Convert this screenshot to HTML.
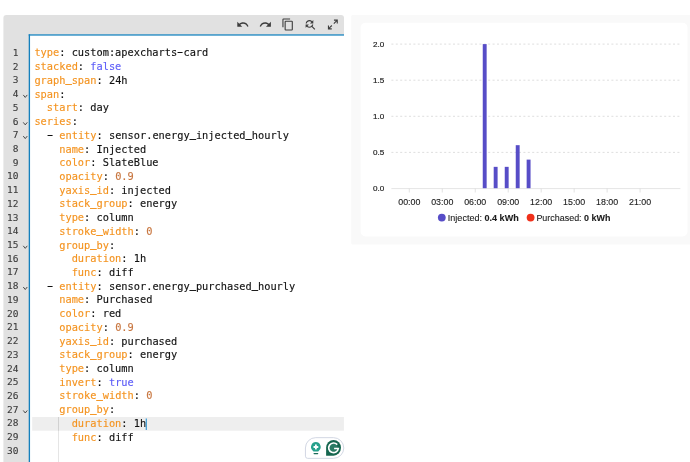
<!DOCTYPE html>
<html lang="en"><head><meta charset="utf-8"><title>apexcharts-card editor</title>
<style>
html,body{margin:0;padding:0;background:#fff;}
body{width:690px;height:462px;overflow:hidden;position:relative;font-family:"Liberation Sans",sans-serif;}
#root{position:absolute;left:0;top:0;width:690px;height:462px;will-change:transform;}
.abs{position:absolute;}
.ln,.cl{position:absolute;white-space:pre;font-family:"DejaVu Sans Mono","Liberation Mono",monospace;font-size:10.32px;line-height:13.72px;height:13.72px;margin:0;}
.ln{left:0;width:18.5px;text-align:right;color:#3a3a3a;font-size:9.5px;-webkit-text-stroke:0.1px;}
.cl{left:34.4px;color:#111;-webkit-text-stroke:0.14px;}
.hy{display:inline-block;transform:translateY(-0.4px) scale(1.8,1.2);transform-origin:50% 62%;}
.us{position:relative;top:-1.6px;-webkit-text-stroke:0.5px;}
.k{color:#f4931f;}
.b{color:#5c5cf8;}
.n{color:#c8763f;}
</style></head><body><div id="root">
<svg class="abs" style="left:0;top:0" width="690" height="462" viewBox="0 0 690 462">
<path d="M3.4 470 V18 a3 3 0 0 1 3 -3 H341 a3 3 0 0 1 3 3 V470 Z" fill="#e1e1e1"/>
<rect x="29.5" y="35" width="314.5" height="440" fill="#fff"/>
<rect x="32.2" y="417.0" width="311.7" height="13.7" fill="#eeeeee"/>
<rect x="58.15" y="417.0" width="0.75" height="50" fill="#dcdcdc"/>
<rect x="58.15" y="417.0" width="0.75" height="13.7" fill="#cbcbcb"/>
<rect x="28.7" y="34.3" width="315.3" height="1.35" fill="#2189c2"/>
<rect x="28.7" y="34.3" width="1.35" height="440" fill="#1580bd"/>
<rect x="351.2" y="15" width="345" height="229.6" rx="1.5" fill="#f9f9f9"/>
<rect x="360.6" y="22.8" width="326.9" height="213.7" rx="5" fill="#fff"/>
</svg>

<div class="ln" style="top:45.96px">1</div>
<div class="cl" style="top:46.46px"><span class="k">type</span>: custom:apexcharts<span class="hy">-</span>card</div>
<div class="ln" style="top:59.68px">2</div>
<div class="cl" style="top:60.18px"><span class="k">stacked</span>: <span class="b">false</span></div>
<div class="ln" style="top:73.40px">3</div>
<div class="cl" style="top:73.90px"><span class="k">graph<span class="us">_</span>span</span>: 24h</div>
<div class="ln" style="top:87.12px">4</div>
<div class="cl" style="top:87.62px"><span class="k">span</span>:</div>
<div class="ln" style="top:100.84px">5</div>
<div class="cl" style="top:101.34px">  <span class="k">start</span>: day</div>
<div class="ln" style="top:114.56px">6</div>
<div class="cl" style="top:115.06px"><span class="k">series</span>:</div>
<div class="ln" style="top:128.28px">7</div>
<div class="cl" style="top:128.78px">  <span class="hy">-</span> <span class="k">entity</span>: sensor.energy<span class="us">_</span>injected<span class="us">_</span>hourly</div>
<div class="ln" style="top:142.00px">8</div>
<div class="cl" style="top:142.50px">    <span class="k">name</span>: Injected</div>
<div class="ln" style="top:155.72px">9</div>
<div class="cl" style="top:156.22px">    <span class="k">color</span>: SlateBlue</div>
<div class="ln" style="top:169.44px">10</div>
<div class="cl" style="top:169.94px">    <span class="k">opacity</span>: <span class="n">0.9</span></div>
<div class="ln" style="top:183.16px">11</div>
<div class="cl" style="top:183.66px">    <span class="k">yaxis<span class="us">_</span>id</span>: injected</div>
<div class="ln" style="top:196.88px">12</div>
<div class="cl" style="top:197.38px">    <span class="k">stack<span class="us">_</span>group</span>: energy</div>
<div class="ln" style="top:210.60px">13</div>
<div class="cl" style="top:211.10px">    <span class="k">type</span>: column</div>
<div class="ln" style="top:224.32px">14</div>
<div class="cl" style="top:224.82px">    <span class="k">stroke<span class="us">_</span>width</span>: <span class="n">0</span></div>
<div class="ln" style="top:238.04px">15</div>
<div class="cl" style="top:238.54px">    <span class="k">group<span class="us">_</span>by</span>:</div>
<div class="ln" style="top:251.76px">16</div>
<div class="cl" style="top:252.26px">      <span class="k">duration</span>: 1h</div>
<div class="ln" style="top:265.48px">17</div>
<div class="cl" style="top:265.98px">      <span class="k">func</span>: diff</div>
<div class="ln" style="top:279.20px">18</div>
<div class="cl" style="top:279.70px">  <span class="hy">-</span> <span class="k">entity</span>: sensor.energy<span class="us">_</span>purchased<span class="us">_</span>hourly</div>
<div class="ln" style="top:292.92px">19</div>
<div class="cl" style="top:293.42px">    <span class="k">name</span>: Purchased</div>
<div class="ln" style="top:306.64px">20</div>
<div class="cl" style="top:307.14px">    <span class="k">color</span>: red</div>
<div class="ln" style="top:320.36px">21</div>
<div class="cl" style="top:320.86px">    <span class="k">opacity</span>: <span class="n">0.9</span></div>
<div class="ln" style="top:334.08px">22</div>
<div class="cl" style="top:334.58px">    <span class="k">yaxis<span class="us">_</span>id</span>: purchased</div>
<div class="ln" style="top:347.80px">23</div>
<div class="cl" style="top:348.30px">    <span class="k">stack<span class="us">_</span>group</span>: energy</div>
<div class="ln" style="top:361.52px">24</div>
<div class="cl" style="top:362.02px">    <span class="k">type</span>: column</div>
<div class="ln" style="top:375.24px">25</div>
<div class="cl" style="top:375.74px">    <span class="k">invert</span>: <span class="b">true</span></div>
<div class="ln" style="top:388.96px">26</div>
<div class="cl" style="top:389.46px">    <span class="k">stroke<span class="us">_</span>width</span>: <span class="n">0</span></div>
<div class="ln" style="top:402.68px">27</div>
<div class="cl" style="top:403.18px">    <span class="k">group<span class="us">_</span>by</span>:</div>
<div class="ln" style="top:416.40px">28</div>
<div class="cl" style="top:416.90px">      <span class="k">duration</span>: 1h</div>
<div class="ln" style="top:430.12px">29</div>
<div class="cl" style="top:430.62px">      <span class="k">func</span>: diff</div>
<div class="ln" style="top:443.84px">30</div>
<div class="cl" style="top:444.34px">    </div>
<svg class="abs" style="left:0;top:0" width="690" height="462" viewBox="0 0 690 462" font-family="'Liberation Sans',sans-serif">
<line x1="391.4" x2="680.4" y1="152.40" y2="152.40" stroke="#d6d6d6" stroke-width="0.8" stroke-dasharray="2 2.4"/>
<line x1="391.4" x2="680.4" y1="116.30" y2="116.30" stroke="#d6d6d6" stroke-width="0.8" stroke-dasharray="2 2.4"/>
<line x1="391.4" x2="680.4" y1="80.20" y2="80.20" stroke="#d6d6d6" stroke-width="0.8" stroke-dasharray="2 2.4"/>
<line x1="391.4" x2="680.4" y1="44.10" y2="44.10" stroke="#d6d6d6" stroke-width="0.8" stroke-dasharray="2 2.4"/>
<line x1="391.4" x2="680.4" y1="188.60" y2="188.60" stroke="#dcdcdc" stroke-width="0.75"/>
<line x1="409.30" x2="409.30" y1="188.50" y2="192.50" stroke="#d8d8d8" stroke-width="0.75"/>
<text x="409.30" y="205.1" font-size="8.85" text-anchor="middle" fill="#1c1c1c" stroke="#1c1c1c" stroke-width="0.12">00:00</text>
<line x1="442.27" x2="442.27" y1="188.50" y2="192.50" stroke="#d8d8d8" stroke-width="0.75"/>
<text x="442.27" y="205.1" font-size="8.85" text-anchor="middle" fill="#1c1c1c" stroke="#1c1c1c" stroke-width="0.12">03:00</text>
<line x1="475.24" x2="475.24" y1="188.50" y2="192.50" stroke="#d8d8d8" stroke-width="0.75"/>
<text x="475.24" y="205.1" font-size="8.85" text-anchor="middle" fill="#1c1c1c" stroke="#1c1c1c" stroke-width="0.12">06:00</text>
<line x1="508.21" x2="508.21" y1="188.50" y2="192.50" stroke="#d8d8d8" stroke-width="0.75"/>
<text x="508.21" y="205.1" font-size="8.85" text-anchor="middle" fill="#1c1c1c" stroke="#1c1c1c" stroke-width="0.12">09:00</text>
<line x1="541.18" x2="541.18" y1="188.50" y2="192.50" stroke="#d8d8d8" stroke-width="0.75"/>
<text x="541.18" y="205.1" font-size="8.85" text-anchor="middle" fill="#1c1c1c" stroke="#1c1c1c" stroke-width="0.12">12:00</text>
<line x1="574.15" x2="574.15" y1="188.50" y2="192.50" stroke="#d8d8d8" stroke-width="0.75"/>
<text x="574.15" y="205.1" font-size="8.85" text-anchor="middle" fill="#1c1c1c" stroke="#1c1c1c" stroke-width="0.12">15:00</text>
<line x1="607.12" x2="607.12" y1="188.50" y2="192.50" stroke="#d8d8d8" stroke-width="0.75"/>
<text x="607.12" y="205.1" font-size="8.85" text-anchor="middle" fill="#1c1c1c" stroke="#1c1c1c" stroke-width="0.12">18:00</text>
<line x1="640.09" x2="640.09" y1="188.50" y2="192.50" stroke="#d8d8d8" stroke-width="0.75"/>
<text x="640.09" y="205.1" font-size="8.85" text-anchor="middle" fill="#1c1c1c" stroke="#1c1c1c" stroke-width="0.12">21:00</text>
<text x="384.2" y="191.40" font-size="8.1" text-anchor="end" fill="#1c1c1c" stroke="#1c1c1c" stroke-width="0.18">0.0</text>
<text x="384.2" y="155.30" font-size="8.1" text-anchor="end" fill="#1c1c1c" stroke="#1c1c1c" stroke-width="0.18">0.5</text>
<text x="384.2" y="119.20" font-size="8.1" text-anchor="end" fill="#1c1c1c" stroke="#1c1c1c" stroke-width="0.18">1.0</text>
<text x="384.2" y="83.10" font-size="8.1" text-anchor="end" fill="#1c1c1c" stroke="#1c1c1c" stroke-width="0.18">1.5</text>
<text x="384.2" y="47.00" font-size="8.1" text-anchor="end" fill="#1c1c1c" stroke="#1c1c1c" stroke-width="0.18">2.0</text>
<rect x="482.75" y="44.10" width="3.9" height="144.10" fill="#574dc7"/>
<rect x="493.70" y="166.84" width="3.9" height="21.36" fill="#574dc7"/>
<rect x="504.75" y="166.84" width="3.9" height="21.36" fill="#574dc7"/>
<rect x="515.75" y="145.18" width="3.9" height="43.02" fill="#574dc7"/>
<rect x="526.65" y="159.62" width="3.9" height="28.58" fill="#574dc7"/>
<circle cx="441.8" cy="217.6" r="3.9" fill="#574dc7"/>
<text x="447.8" y="220.7" font-size="9.05" fill="#1c1c1c" stroke="#1c1c1c" stroke-width="0.1">Injected: <tspan font-weight="bold">0.4 kWh</tspan></text>
<circle cx="530.6" cy="217.6" r="3.9" fill="#f0301a"/>
<text x="536.4" y="220.7" font-size="8.95" fill="#1c1c1c" stroke="#1c1c1c" stroke-width="0.1">Purchased: <tspan font-weight="bold">0 kWh</tspan></text>
<path transform="translate(236.20 17.9) scale(0.55)" fill="#3d3d3d" d="M12.5,8C9.85,8 7.45,9 5.6,10.6L2,7V16H11L7.38,12.38C8.77,11.22 10.54,10.5 12.5,10.5C16.04,10.5 19.05,12.81 20.1,16L22.47,15.22C21.08,11.03 17.15,8 12.5,8Z"/>
<path transform="translate(258.80 17.9) scale(0.55)" fill="#3d3d3d" d="M18.4,10.6C16.55,9 14.15,8 11.5,8C6.85,8 2.92,11.03 1.54,15.22L3.9,16C4.95,12.81 7.95,10.5 11.5,10.5C13.45,10.5 15.23,11.22 16.62,12.38L13,16H22V7L18.4,10.6Z"/>
<path transform="translate(281.30 17.9) scale(0.55)" fill="#3d3d3d" d="M19,21H8V7H19M19,5H8A2,2 0 0,0 6,7V21A2,2 0 0,0 8,23H19A2,2 0 0,0 21,21V7A2,2 0 0,0 19,5M16,1H4A2,2 0 0,0 2,3V17H4V3H16V1Z"/>
<path transform="translate(303.40 17.9) scale(0.55)" fill="#3d3d3d" d="M11,6C12.38,6 13.63,6.56 14.54,7.46L12,10H18V4L15.95,6.05C14.68,4.78 12.93,4 11,4C7.47,4 4.57,6.61 4.08,10H6.1C6.56,7.72 8.58,6 11,6M16.64,15.14C17.3,14.24 17.76,13.17 17.92,12H15.9C15.44,14.28 13.42,16 11,16C9.62,16 8.37,15.44 7.46,14.54L10,12H4V18L6.05,15.95C7.32,17.22 9.07,18 11,18C12.55,18 14,17.5 15.14,16.64L20,21.5L21.5,20L16.64,15.14Z"/>
<path transform="translate(326.25 17.9) scale(0.55)" fill="#3d3d3d" d="M10,21V19H6.41L10.91,14.5L9.5,13.09L5,17.59V14H3V21H10M14.5,10.91L19,6.41V10H21V3H14V5H17.59L13.09,9.5L14.5,10.91Z"/>
<path transform="translate(22.95 94.62)" d="M0.3 0.3 L2.3 2.8 L4.3 0.3" fill="none" stroke="#383838" stroke-width="0.9"/>
<path transform="translate(22.95 122.06)" d="M0.3 0.3 L2.3 2.8 L4.3 0.3" fill="none" stroke="#383838" stroke-width="0.9"/>
<path transform="translate(22.95 135.78)" d="M0.3 0.3 L2.3 2.8 L4.3 0.3" fill="none" stroke="#383838" stroke-width="0.9"/>
<path transform="translate(22.95 245.54)" d="M0.3 0.3 L2.3 2.8 L4.3 0.3" fill="none" stroke="#383838" stroke-width="0.9"/>
<path transform="translate(22.95 286.70)" d="M0.3 0.3 L2.3 2.8 L4.3 0.3" fill="none" stroke="#383838" stroke-width="0.9"/>
<path transform="translate(22.95 410.18)" d="M0.3 0.3 L2.3 2.8 L4.3 0.3" fill="none" stroke="#383838" stroke-width="0.9"/>
<rect x="145.7" y="418.50" width="1.2" height="11.5" fill="#3b9bd4"/>
</svg>
<svg class="abs" style="left:0;top:0" width="690" height="462" viewBox="0 0 690 462">
<path d="M315.75 437.65 H333.45 A10.3 10.3 0 0 1 343.75 447.95 V448.05 A10.3 10.3 0 0 1 333.45 458.35 H307.65 A2.2 2.2 0 0 1 305.45 456.15 V447.95 A10.3 10.3 0 0 1 315.75 437.65 Z" fill="#fff" stroke="#cdd2e0" stroke-width="0.9"/>
<path d="M315.85 442.1 a5.05 4.9 0 0 1 3.3 8.4 q-0.7 0.6 -0.8 1.1 h-5 q-0.1 -0.5 -0.8 -1.1 a5.05 4.9 0 0 1 3.3 -8.4 z" fill="#27a18c"/>
<path d="M315.9 444.3 q0.9 0 0.9 0.9 v0.8 h0.8 q0.9 0 0.9 0.95 q0 0.95 -0.9 0.95 h-0.8 v0.8 q0 0.9 -0.9 0.9 q-0.9 0 -0.9 -0.9 v-0.8 h-0.8 q-0.9 0 -0.9 -0.95 q0 -0.95 0.9 -0.95 h0.8 v-0.8 q0 -0.9 0.9 -0.9 z" fill="#fff"/>
<rect x="313.5" y="452.9" width="4.8" height="1.3" rx="0.6" fill="#1a6a58"/>
<path d="M326.1 447.8 A7.45 7.8 0 1 1 333.55 455.65 L326.1 455.65 Z" fill="#15664f"/>
<circle cx="333.50" cy="447.75" r="4.2" fill="#2a7b64"/>
<path d="M337.22 444.63 A4.85 4.85 0 1 0 338.35 448.50 L334.10 448.50" fill="none" stroke="#fff" stroke-width="1.65"/>
</svg>
</div></body></html>
